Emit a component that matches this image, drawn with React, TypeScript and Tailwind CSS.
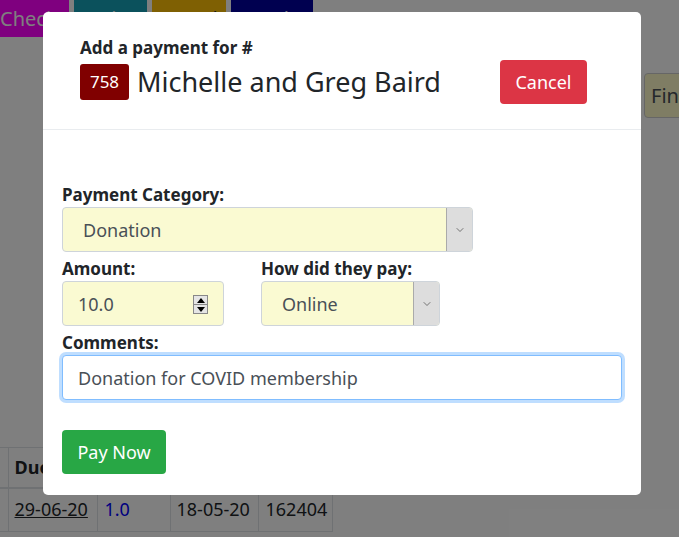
import { ChevronDown } from "lucide-react";

const font = { fontFamily: '"Noto Sans", "Open Sans", sans-serif' };

function Select({ value, className }: { value: string; className: string }) {
  return (
    <div
      className={`flex h-[45px] items-stretch overflow-hidden rounded border border-[#ced4da] bg-[#fafad2] ${className}`}
    >
      <span className="flex flex-1 items-center pl-[20px] pt-[2px] text-[18px] text-[#495057]">
        {value}
      </span>
      <span className="flex w-[26px] items-center justify-center border-l border-[#aaa] bg-[#dddddd]">
        <ChevronDown className="h-3 w-3 text-[#333]" strokeWidth={1.25} />
      </span>
    </div>
  );
}

function Spinner() {
  return (
    <span className="flex h-[19px] w-[15px] flex-col border border-[#888] bg-[#e5e5e5]">
      <span className="flex flex-1 items-center justify-center border-b border-[#888]">
        <span className="h-0 w-0 border-x-[4px] border-b-[5px] border-x-transparent border-b-black" />
      </span>
      <span className="flex flex-1 items-center justify-center">
        <span className="h-0 w-0 border-x-[4px] border-t-[5px] border-x-transparent border-t-black" />
      </span>
    </span>
  );
}

export default function App() {
  return (
    <div className="relative h-[537px] w-[679px] overflow-hidden bg-white text-[#212529]" style={font}>
      {/* page behind */}
      <div className="flex h-full flex-col">
        <div className="flex h-[37px] gap-[5px] text-[20px] text-white">
          <div className="-ml-[30px] w-[99px] shrink-0 bg-[#ff00ff] pl-[30px] leading-[37px]">Check To</div>
          <div className="w-[73px] shrink-0 bg-[#17a2b8] pl-[13px] leading-[37px]">Balance</div>
          <div className="w-[74px] shrink-0 bg-[#ffc107] pl-[19px] leading-[37px] text-[#212529]">Invoices</div>
          <div className="w-[82px] shrink-0 bg-[#0000a0] pl-[12px] leading-[37px]">Version 1</div>
        </div>
        <div className="mt-[36px] flex justify-end">
          <div className="-mr-[30px] h-[45px] w-[65px] rounded border border-[#ccc] bg-[#fffac8] pl-[6px] text-[20px] leading-[43px] text-[#495057]">
            Find
          </div>
        </div>
        <table className="mt-[329px] w-[333px] border-collapse text-[18px]">
          <tbody>
            <tr className="h-[40px] border-t border-b-2 border-[#dee2e6]">
              <td className="w-[8px] border-r border-[#dee2e6]"></td>
              <th className="w-[89px] border-r border-[#dee2e6] pl-[6px] text-left font-bold">Due</th>
              <td className="w-[73px] border-r border-[#dee2e6]"></td>
              <td className="w-[88px] border-r border-[#dee2e6]"></td>
              <td className="border-r border-[#dee2e6]"></td>
            </tr>
            <tr className="h-[44px] border-b border-[#dee2e6]">
              <td className="border-r border-[#dee2e6]"></td>
              <td className="border-r border-[#dee2e6] pl-[6px] underline">29-06-20</td>
              <td className="border-r border-[#dee2e6] pl-[7px] text-[#0000ff]">1.0</td>
              <td className="border-r border-[#dee2e6] pl-[6px]">18-05-20</td>
              <td className="border-r border-[#dee2e6] pl-[7px]">162404</td>
            </tr>
          </tbody>
        </table>
      </div>

      {/* modal */}
      <div className="absolute inset-0 bg-black/50">
        <div className="ml-[43px] mt-[12px] w-[598px] rounded-[5px] bg-white">
          <div className="flex items-start justify-between border-b border-[#e9ecef] pb-[25px] pl-[37px] pr-[54px] pt-[22px]">
            <div className="flex flex-col">
              <div className="text-[17px] font-bold leading-[28px]">Add a payment for #</div>
              <div className="flex items-center gap-[8px]">
                <span className="flex h-[36px] w-[49px] items-center justify-center rounded-[3px] bg-[#800000] text-[17px] text-white">
                  758
                </span>
                <span className="text-[27px] leading-[40px]">Michelle and Greg Baird</span>
              </div>
            </div>
            <button className="mt-[26px] h-[44px] w-[87px] rounded bg-[#dc3545] text-[18px] text-white">
              Cancel
            </button>
          </div>
          <div className="flex flex-col px-[19px] pb-[21px] pt-[52px]">
            <label className="text-[17px] font-bold leading-[25px]">Payment Category:</label>
            <Select value="Donation" className="w-[411px]" />
            <div className="mt-[4px] flex gap-[37px]">
              <div className="flex flex-col">
                <label className="text-[17px] font-bold leading-[25px]">Amount:</label>
                <div className="flex h-[45px] w-[162px] items-center justify-between rounded border border-[#ced4da] bg-[#fafad2] pl-[15px] pr-[15px] pt-[2px] text-[18px] text-[#495057]">
                  10.0
                  <Spinner />
                </div>
              </div>
              <div className="flex flex-col">
                <label className="text-[17px] font-bold leading-[25px]">How did they pay:</label>
                <Select value="Online" className="w-[179px]" />
              </div>
            </div>
            <label className="mt-[4px] text-[17px] font-bold leading-[25px]">Comments:</label>
            <div className="flex h-[45px] w-[560px] items-center rounded border border-[#80bdff] bg-white pl-[15px] pt-[2px] text-[18px] text-[#495057] shadow-[0_0_0_3px_rgba(0,123,255,0.25)]">
              Donation for COVID membership
            </div>
            <button className="mt-[30px] h-[44px] w-[104px] rounded bg-[#28a745] text-[18px] text-white">
              Pay Now
            </button>
          </div>
        </div>
      </div>
    </div>
  );
}
